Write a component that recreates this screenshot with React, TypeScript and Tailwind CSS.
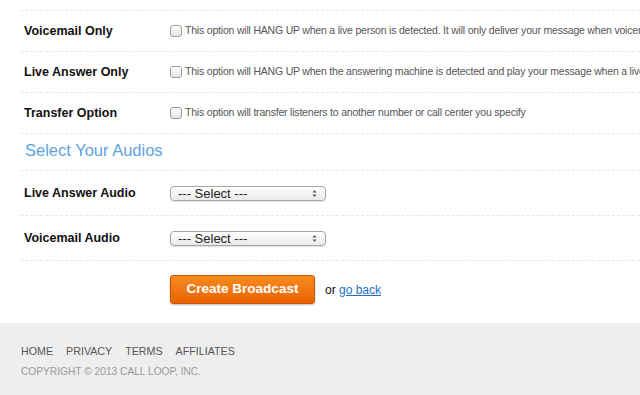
import React from "react";

const options = [
  {
    label: "Voicemail Only",
    text: "This option will HANG UP when a live person is detected. It will only deliver your message when voicemail is detected.",
  },
  {
    label: "Live Answer Only",
    text: "This option will HANG UP when the answering machine is detected and play your message when a live person answers.",
  },
  {
    label: "Transfer Option",
    text: "This option will transfer listeners to another number or call center you specify",
  },
];

const audios = ["Live Answer Audio", "Voicemail Audio"];

const SelectBox: React.FC = () => (
  <div className="relative w-[156px] h-[15px]">
    <select className="block appearance-none w-full h-full rounded-[4px] border border-[#a5a5a5] bg-gradient-to-b from-white to-[#ebebeb] pl-[7px] text-[13px] leading-[13px] text-[#222] shadow-[0_1px_1px_rgba(0,0,0,0.12)] outline-none">
      <option>--- Select ---</option>
    </select>
    <svg
      className="absolute right-[9px] top-[3px] pointer-events-none"
      width="5"
      height="9"
      viewBox="0 0 5 9"
    >
      <path d="M0.5 3.5 L2.5 1 L4.5 3.5 Z" fill="#555" />
      <path d="M0.5 5.5 L2.5 8 L4.5 5.5 Z" fill="#555" />
    </svg>
  </div>
);

const App: React.FC = () => {
  return (
    <div className="w-[640px] h-[395px] overflow-hidden bg-white font-['Liberation_Sans',Arial,sans-serif]">
      <div className="pl-5">
        <div className="h-[11px] border-b border-dashed border-[#e6e6e6]" />

        {options.map(({ label, text }) => (
          <div
            key={label}
            className="h-[41px] flex items-center border-b border-dashed border-[#e6e6e6] pl-1"
          >
            <p className="w-[146px] shrink-0 text-[12.5px] font-bold text-[#111]">
              {label}
            </p>
            <div className="flex items-center gap-[3px] whitespace-nowrap">
              <span className="w-[12px] h-[12px] shrink-0 rounded-[3px] border border-[#9b9b9b] bg-gradient-to-b from-white to-[#e4e4e4]" />
              <span className="text-[10.5px] tracking-[-0.2px] text-[#555]">
                {text}
              </span>
            </div>
          </div>
        ))}

        <div className="h-[37px] flex items-center border-b border-dashed border-[#e6e6e6] pl-[5px] pb-[3px]">
          <h2 className="text-[16.5px] text-[#5ea3dc]">Select Your Audios</h2>
        </div>

        {audios.map((label) => (
          <div
            key={label}
            className="h-[45px] flex items-center border-b border-dashed border-[#e6e6e6] pl-1"
          >
            <p className="w-[146px] shrink-0 text-[12.5px] font-bold text-[#111]">
              {label}
            </p>
            <SelectBox />
          </div>
        ))}

        <div className="h-[62px] flex items-start pt-[14px] pl-[150px]">
          <button className="w-[145px] h-[29px] rounded-[3px] border border-[#c55400] bg-gradient-to-b from-[#f88a1e] to-[#e96300] text-white text-[13.5px] font-bold shadow-[0_1px_2px_rgba(0,0,0,0.25)]">
            Create Broadcast
          </button>
          <p className="ml-[10px] mt-[6px] text-[12px] text-[#111]">
            or{" "}
            <a href="#" className="text-[#1a6fc9] underline">
              go back
            </a>
          </p>
        </div>
      </div>

      <footer className="h-[73px] bg-[#eeeeee] px-[21px] pt-[22px]">
        <nav className="flex gap-[13px] text-[10.7px] leading-[13px] text-[#555]">
          <a href="#">HOME</a>
          <a href="#">PRIVACY</a>
          <a href="#">TERMS</a>
          <a href="#">AFFILIATES</a>
        </nav>
        <p className="mt-[8px] text-[10.2px] leading-[12px] text-[#9a9a9a]">
          COPYRIGHT © 2013 CALL LOOP, INC.
        </p>
      </footer>
    </div>
  );
};

export default App;
